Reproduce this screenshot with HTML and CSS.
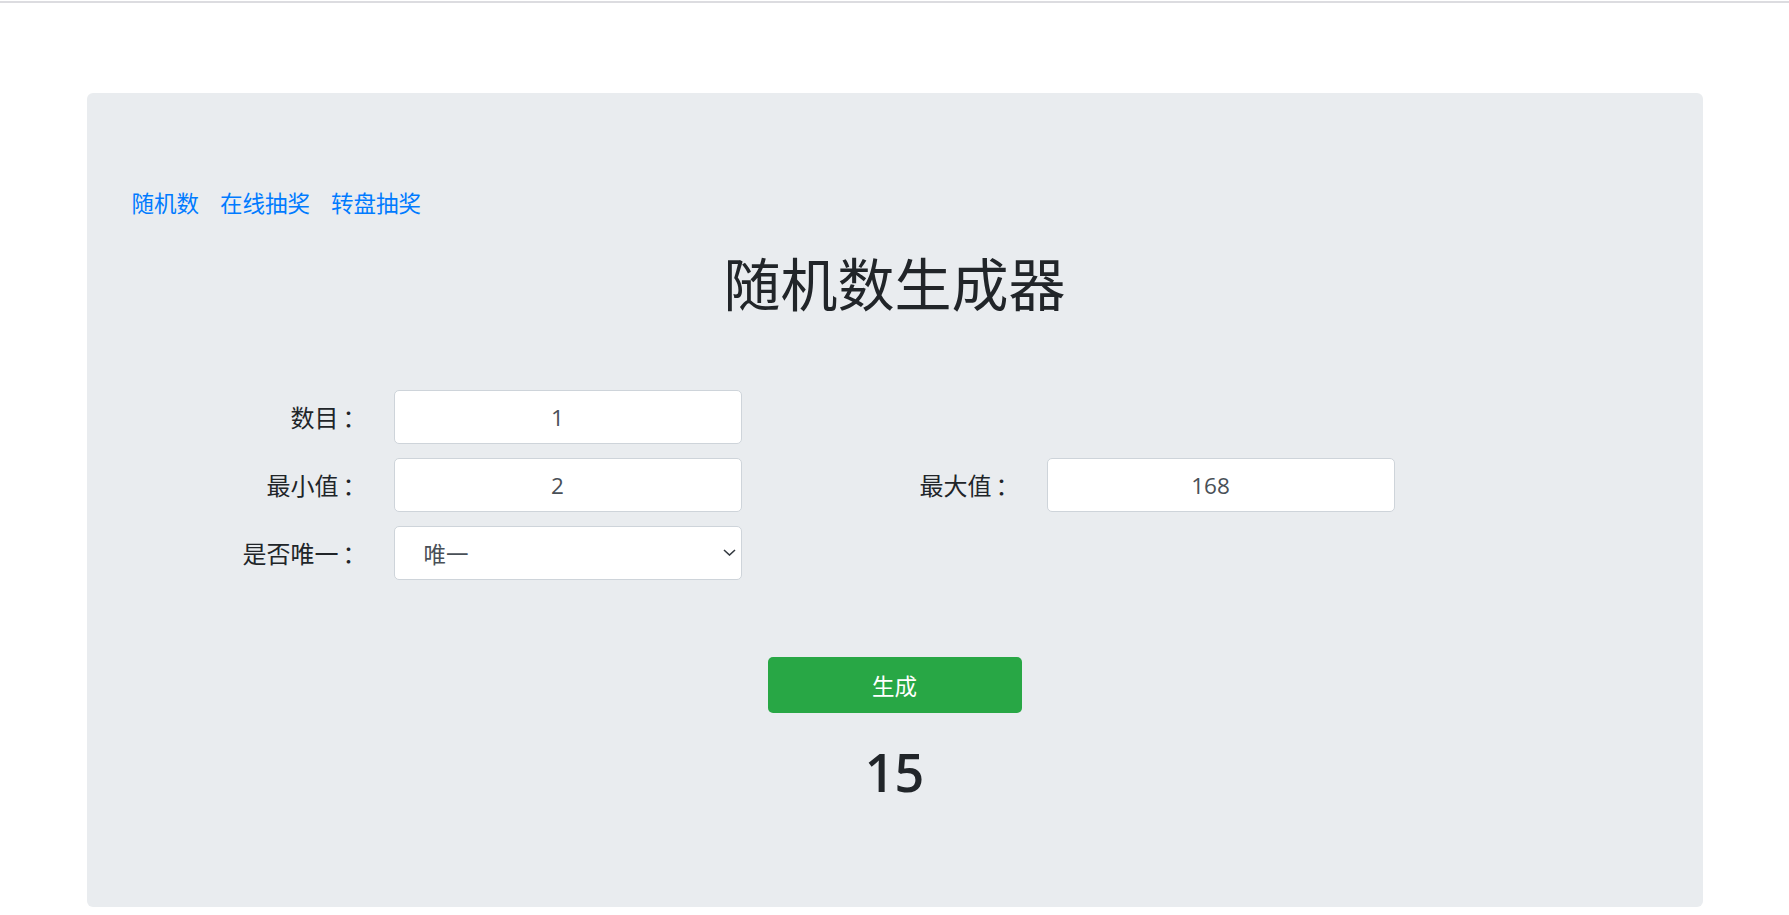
FILE: index.html
```html
<!DOCTYPE html>
<html lang="zh-CN">
<head>
    <meta charset="UTF-8">
    <meta name="viewport" content="width=device-width, initial-scale=1.0">
    <title>随机数生成器</title>
    <link rel="stylesheet" href="styles.css">
</head>
<body>
    <div class="topline"></div>
    <div class="jumbotron">
        <nav class="links">
            <a href="#">随机数</a>
            <a href="#">在线抽奖</a>
            <a href="#">转盘抽奖</a>
        </nav>
        <h1 class="title">随机数生成器</h1>

        <form class="rand-form" onsubmit="return false;">
            <label class="label" for="count">数目<span class="colon">：</span></label>
            <input class="field" id="count" type="text" value="1">
            <span></span>
            <span></span>

            <label class="label" for="min">最小值<span class="colon">：</span></label>
            <input class="field" id="min" type="text" value="2">
            <label class="label" for="max">最大值<span class="colon">：</span></label>
            <input class="field" id="max" type="text" value="168">

            <label class="label" for="unique">是否唯一<span class="colon">：</span></label>
            <div class="select-wrap">
                <select class="field select" id="unique">
                    <option>唯一</option>
                    <option>不唯一</option>
                </select>
                <svg class="chevron" width="13" height="7" viewBox="0 0 13 7">
                    <polyline points="1,1 6.5,6 12,1" fill="none" stroke="#343a40" stroke-width="1.6"/>
                </svg>
            </div>
        </form>

        <button class="btn-go" type="button">生成</button>
        <div class="result" id="result">15</div>
    </div>
</body>
</html>
```

FILE: styles.css
```css
body {
    margin: 0;
    padding: 0;
    background-color: #fff;
    color: #212529;
    font-family: "Noto Sans CJK SC", sans-serif;
}
.topline {
    margin-top: 1px;
    border-top: 2px solid #dcdce0;
}
.jumbotron {
    width: 1616px;
    margin: 90px auto 0;
    padding: 93px 45px 104px;
    box-sizing: border-box;
    background-color: #e9ecef;
    border-radius: 6px;
}
.links {
    display: flex;
    gap: 21px;
    font-size: 22.5px;
    line-height: 33px;
}
.links a {
    color: #007bff;
    text-decoration: none;
}
.title {
    margin: 28px 0 0;
    font-size: 57px;
    line-height: 68px;
    font-weight: 400;
    text-align: center;
    color: #212529;
}
.rand-form {
    display: grid;
    grid-template-columns: 231px 348px 243px 348px;
    grid-auto-rows: 54px;
    column-gap: 31px;
    row-gap: 14px;
    margin-top: 75px;
}
.label {
    align-self: center;
    text-align: right;
    font-size: 24px;
    line-height: 34px;
    color: #212529;
}
.colon {
    margin-left: 4px;
    margin-right: -4px;
}
.field {
    width: 100%;
    height: 100%;
    box-sizing: border-box;
    border: 1px solid #ced4da;
    border-radius: 5px;
    background-color: #fff;
    color: #495057;
    font-family: "Open Sans", "Noto Sans CJK SC", sans-serif;
    font-size: 22.5px;
    text-align: center;
    padding: 0 32px 0 12px;
    outline: none;
}
.select-wrap {
    position: relative;
}
.select {
    -webkit-appearance: none;
    appearance: none;
    text-align: left;
    padding: 0 30px 0 29px;
    font-family: "Noto Sans CJK SC", sans-serif;
}
.chevron {
    position: absolute;
    right: 6px;
    top: 23px;
    pointer-events: none;
}
.btn-go {
    display: block;
    width: 254px;
    height: 56px;
    margin: 77px auto 0;
    border: none;
    border-radius: 5px;
    background-color: #28a745;
    color: #fff;
    font-family: "Noto Sans CJK SC", sans-serif;
    font-size: 22.5px;
    cursor: pointer;
}
.result {
    margin-top: 28px;
    text-align: center;
    font-family: "Open Sans", sans-serif;
    font-size: 52px;
    font-weight: 600;
    line-height: 62px;
    color: #212529;
}
```
